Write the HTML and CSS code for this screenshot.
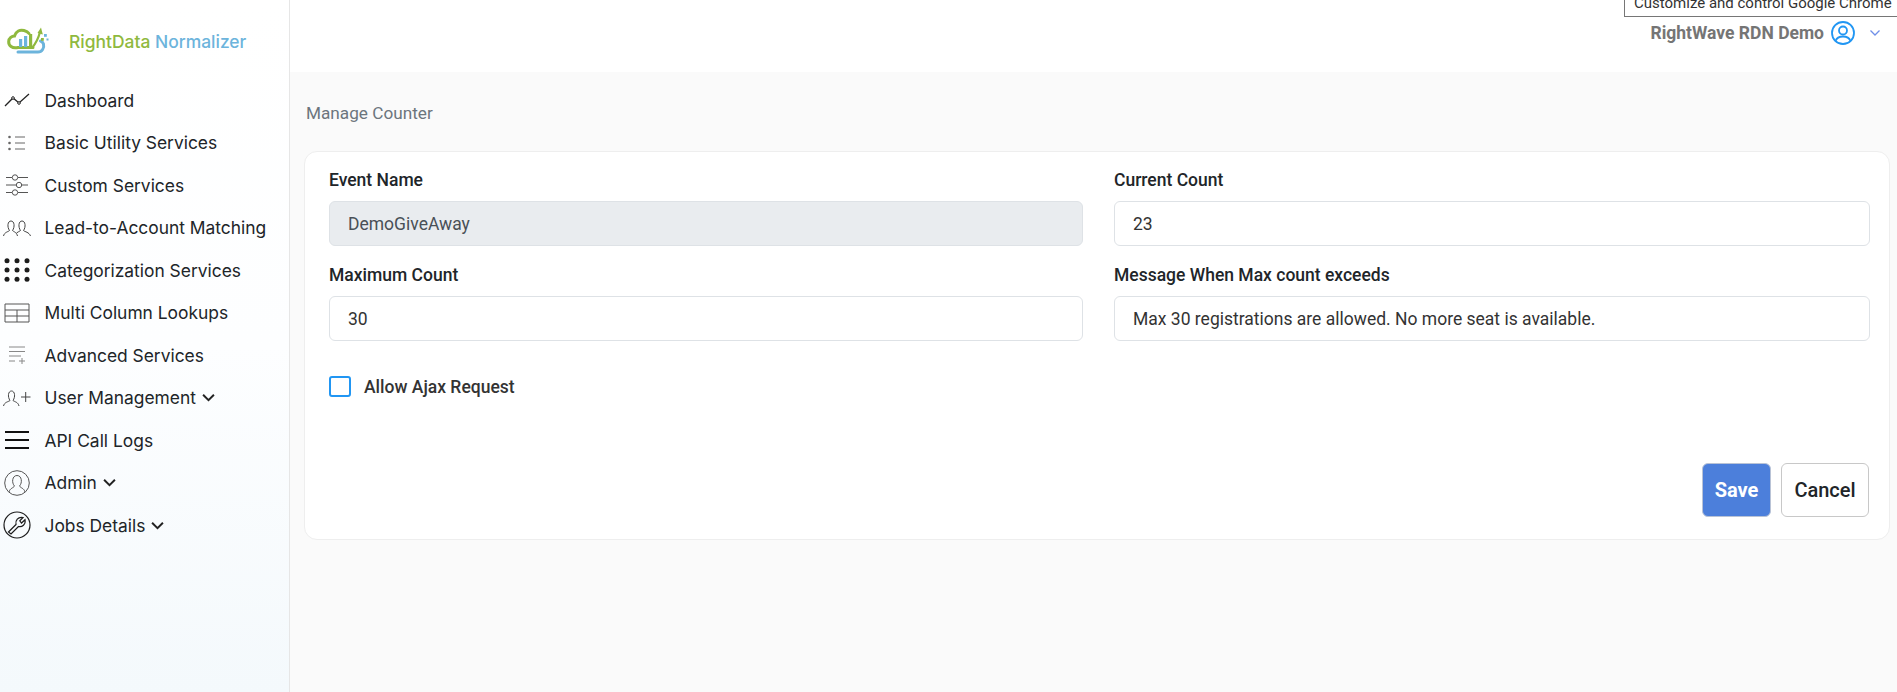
FILE: index.html
```html
<!DOCTYPE html>
<html lang="en">
<head>
<meta charset="utf-8">
<title>Manage Counter</title>
<link rel="stylesheet" href="styles.css">
</head>
<body>
<div class="app">
  <aside class="sidebar">
    <div class="brand">
      <svg class="logo" viewBox="0 0 42 28" width="42" height="28">
        <path d="M26 20.500H11C5 22 1.500 18.500 1.700 14.500C1.900 11 5 9 7.500 9C9 4 13 2.500 17 3.500C19 4 21 5 22 6.500" fill="none" stroke="#8fb93e" stroke-width="3" stroke-linecap="round"/>
        <path d="M11 25H31C35 25 37.500 21 36.500 17C36 15.500 35 14.500 33.500 14" fill="none" stroke="#6cb4dc" stroke-width="3" stroke-linecap="round"/>
        <rect x="12" y="12" width="3.200" height="8" fill="#6cb4dc"/>
        <rect x="17" y="9" width="3.200" height="11" fill="#6cb4dc"/>
        <rect x="22" y="7" width="3.200" height="13" fill="#8fb93e"/>
        <path d="M25 21C29 16 31.500 11 33 5" fill="none" stroke="#8fb93e" stroke-width="2.200"/>
        <path d="M30.500 6L34 0.500L35.800 7.500Z" fill="#8fb93e"/>
        <rect x="37" y="7" width="2.800" height="2.800" fill="#6cb4dc"/>
        <rect x="34" y="11" width="2.800" height="2.800" fill="#8fb93e"/>
        <rect x="39.500" y="11.500" width="2" height="2" fill="#6cb4dc"/>
      </svg>
      <span class="brand-name"><span class="brand-green">RightData</span> <span class="brand-blue">Normalizer</span></span>
    </div>
    <nav class="nav">
      <a class="nav-item">
        <svg class="ico" viewBox="0 0 26 16"><path d="M1 14L9 6L15 11L25 2" fill="none" stroke="#222" stroke-width="1.300"/><circle cx="9" cy="6" r="1.300" fill="#fff" stroke="#222"/><circle cx="15" cy="11" r="1.300" fill="#fff" stroke="#222"/></svg>
        <span>Dashboard</span>
      </a>
      <a class="nav-item">
        <svg class="ico" viewBox="0 0 26 16"><g fill="#666"><circle cx="5.500" cy="2" r="1.300"/><circle cx="5.500" cy="8" r="1.300"/><circle cx="5.500" cy="14" r="1.300"/></g><path d="M11 2H21M11 8H21M11 14H21" stroke="#666" stroke-width="1"/></svg>
        <span>Basic Utility Services</span>
      </a>
      <a class="nav-item">
        <svg class="ico" viewBox="0 0 26 22"><path d="M2 3.500H8M14 3.500H24M2 11H12M18 11H24M2 18.500H8M14 18.500H24" stroke="#555" stroke-width="1"/><g fill="none" stroke="#555"><circle cx="11" cy="3.500" r="2.700"/><circle cx="15" cy="11" r="2.700"/><circle cx="11" cy="18.500" r="2.700"/></g></svg>
        <span>Custom Services</span>
      </a>
      <a class="nav-item">
        <svg class="ico ico-wide" viewBox="0 0 28 18"><g fill="none" stroke="#444" stroke-width="1"><path d="M0.500 17C1.500 13 5 13 6.500 11.500C4 8 4.500 2 8 2C11.500 2 12 8 9.500 11.500C11 13 13.500 13 14.500 17"/><path d="M13.500 14C14.500 13 16 12.800 17.500 11.500C15 8 15.500 2 19 2C22.500 2 23 8 20.500 11.500C22 13 26 13 27.500 17"/></g></svg>
        <span>Lead-to-Account Matching</span>
      </a>
      <a class="nav-item">
        <svg class="ico" viewBox="0 0 26 24"><g fill="#1c1c1c"><circle cx="3" cy="2.700" r="2.500"/><circle cx="13" cy="2.700" r="2.500"/><circle cx="23" cy="2.700" r="2.500"/><circle cx="3" cy="12" r="2.500"/><circle cx="13" cy="12" r="2.500"/><circle cx="23" cy="12" r="2.500"/><circle cx="3" cy="21.300" r="2.500"/><circle cx="13" cy="21.300" r="2.500"/><circle cx="23" cy="21.300" r="2.500"/></g></svg>
        <span>Categorization Services</span>
      </a>
      <a class="nav-item">
        <svg class="ico" viewBox="0 0 26 20"><path d="M1 1H25V19H1ZM1 7H25M1 13H25M13 7V19" fill="none" stroke="#555" stroke-width="1"/></svg>
        <span>Multi Column Lookups</span>
      </a>
      <a class="nav-item">
        <svg class="ico" viewBox="0 0 26 18"><path d="M5 1H21M5 5.500H21M5 10H17M5 15H11M15 15H21M18 12V18" fill="none" stroke="#888" stroke-width="1"/></svg>
        <span>Advanced Services</span>
      </a>
      <a class="nav-item">
        <svg class="ico ico-wide" viewBox="0 0 28 18"><g fill="none" stroke="#444" stroke-width="1"><path d="M0.500 17C1.500 13 5 13 7 11.500C4.500 8 5 2 8.500 2C12 2 12.500 8 10 11.500C12 13 15 13 16 17"/><path d="M18 8H27.500M22.700 3V13"/></g></svg>
        <span>User Management</span>
        <svg class="caret" viewBox="0 0 12 8"><path d="M1 1.500L6 6.500L11 1.500" fill="none" stroke="#222" stroke-width="1.800"/></svg>
      </a>
      <a class="nav-item">
        <svg class="ico" viewBox="0 0 26 20"><path d="M1 2H25M1 10H25M1 18H25" stroke="#111" stroke-width="1.800"/></svg>
        <span>API Call Logs</span>
      </a>
      <a class="nav-item">
        <svg class="ico" viewBox="0 0 26 26"><circle cx="13" cy="13" r="12.300" fill="none" stroke="#555"/><path d="M5 22C6 18 9.500 18 10.500 16C7.500 13 8 5.500 13 5.500C18 5.500 18.500 13 15.500 16C16.500 18 20 18 21 22" fill="none" stroke="#555"/></svg>
        <span>Admin</span>
        <svg class="caret" viewBox="0 0 12 8"><path d="M1 1.500L6 6.500L11 1.500" fill="none" stroke="#222" stroke-width="1.800"/></svg>
      </a>
      <a class="nav-item">
        <svg class="ico ico-large" viewBox="0 0 28 28"><circle cx="14" cy="14" r="13" fill="none" stroke="#1c1c1c" stroke-width="1.200"/><path d="M5.500 21L13 13.500C12 9.500 15 5.500 20 6.500L16.800 9.800L18.500 12L22 8.700C23 13.500 19 16.500 15.500 15.500L8 23Z" fill="none" stroke="#1c1c1c" stroke-width="1.200"/></svg>
        <span>Jobs Details</span>
        <svg class="caret" viewBox="0 0 12 8"><path d="M1 1.500L6 6.500L11 1.500" fill="none" stroke="#222" stroke-width="1.800"/></svg>
      </a>
    </nav>
  </aside>
  <div class="main">
    <header class="topbar">
      <div class="tooltip">Customize and control Google Chrome</div>
      <div class="user">
        <span class="user-name">RightWave RDN Demo</span>
        <svg class="user-ico" viewBox="0 0 24 24"><g fill="none" stroke="#2196f3" stroke-width="1.800"><circle cx="12" cy="12" r="11"/><circle cx="12" cy="9.500" r="4"/><path d="M4.500 20C6 16 9 15.500 12 15.500C15 15.500 18 16 19.500 20"/></g></svg>
        <svg class="user-caret" viewBox="0 0 12 8"><path d="M1.500 1.500L6 6L10.500 1.500" fill="none" stroke="#6f8fe8" stroke-width="1.300"/></svg>
      </div>
    </header>
    <main class="content">
      <h1 class="title">Manage Counter</h1>
      <section class="card">
        <div class="form-grid">
          <div class="field">
            <label class="label">Event Name</label>
            <input class="input input-disabled" value="DemoGiveAway" disabled>
          </div>
          <div class="field">
            <label class="label">Current Count</label>
            <input class="input" value="23">
          </div>
          <div class="field">
            <label class="label">Maximum Count</label>
            <input class="input" value="30">
          </div>
          <div class="field">
            <label class="label">Message When Max count exceeds</label>
            <input class="input" value="Max 30 registrations are allowed. No more seat is available.">
          </div>
        </div>
        <div class="check-row">
          <span class="check"></span>
          <span class="check-label">Allow Ajax Request</span>
        </div>
        <div class="actions">
          <button class="btn btn-save">Save</button>
          <button class="btn btn-cancel">Cancel</button>
        </div>
      </section>
    </main>
  </div>
</div>
</body>
</html>
```
FILE: styles.css
```css
* { box-sizing: border-box; }
html, body { margin: 0; height: 100%; overflow: hidden; }
body { font-family: Roboto, "Liberation Sans", sans-serif; color: #212529; background: #fff; }
.app { display: flex; height: 692px; }

.sidebar {
  width: 290px;
  flex: none;
  border-right: 1px solid #e6e6e6;
  background: linear-gradient(180deg, #ffffff 0%, #fdfeff 50%, #f4f9fc 100%);
}
.brand { display: flex; align-items: center; height: 72px; padding: 10px 0 0 7px; margin-bottom: 7px; }
.logo { flex: none; margin-right: 20px; margin-top: -1px; }
.brand-name { font-family: Inter, sans-serif; font-size: 17.450px; font-weight: 500; }
.brand-green { color: #8fb93e; }
.brand-blue { color: #6cb4dc; }

.nav { display: flex; flex-direction: column; }
.nav-item {
  display: flex;
  align-items: center;
  height: 42.5px;
  font-family: Inter, sans-serif;
  font-size: 17.400px;
  color: #212529;
  position: relative;
  padding-left: 44.5px;
}
.ico { position: absolute; left: 4px; top: 50%; width: 26px; height: 26px; transform: translateY(-50%); }
.ico-wide { left: 3px; width: 28px; height: 28px; }
.ico-large { left: 3px; width: 28px; height: 28px; }
.caret { width: 13px; height: 9px; margin-left: 6px; }

.main { flex: 1; display: flex; flex-direction: column; min-width: 0; }
.topbar { height: 72px; flex: none; background: #fff; position: relative; }
.tooltip {
  position: absolute;
  top: -7px;
  left: 1334px;
  width: 280px;
  height: 24px;
  padding: 0 9px;
  border: 1px solid #767676;
  border-top: 0;
  background: #fff;
  font-size: 15px;
  line-height: 20px;
  color: #333;
  white-space: nowrap;
  overflow: hidden;
}
.user { position: absolute; right: 16px; top: 21px; display: flex; align-items: center; }
.user-name { font-size: 17.500px; font-weight: 700; color: #757575; }
.user-ico { width: 24px; height: 24px; margin-left: 7px; }
.user-caret { width: 12px; height: 8px; margin-left: 14px; }

.content { flex: 1; background: #fafafa; padding: 31px 7px 0 14px; }
.title { margin: 0 0 27px 2px; font-size: 17.200px; line-height: 21px; font-weight: 400; color: #6c757d; }
.card {
  height: 389px;
  padding: 16px 20px 0 24px;
  background: #fff;
  border: 1px solid #eeeeee;
  border-radius: 13px;
  display: flex;
  flex-direction: column;
}
.form-grid { display: grid; grid-template-columns: 754px 756px; column-gap: 31px; row-gap: 0; }
.field { display: flex; flex-direction: column; height: 95px; }
.label { font-size: 17.500px; font-weight: 500; line-height: 24px; color: #212529; margin-bottom: 9px; }
.input {
  width: 100%;
  height: 45px;
  padding: 0 18px;
  border: 1px solid #dee2e6;
  border-radius: 6px;
  background: #fff;
  font-family: Roboto, sans-serif;
  font-size: 17.500px;
  color: #333;
}
.input-disabled { background: #e9ecef; color: #495057; }
.check-row { display: flex; align-items: center; margin-top: 18px; }
.check { width: 22px; height: 21px; border: 2px solid #2196f3; border-radius: 3px; background: #fff; }
.check-label { margin-left: 13px; font-size: 17.500px; font-weight: 500; color: #333; }
.actions { display: flex; justify-content: flex-end; gap: 10px; margin-top: auto; margin-bottom: 22px; }
.btn { height: 54px; border-radius: 6px; font-family: Roboto, sans-serif; font-size: 20px; }
.btn-save { width: 69px; background: #4c7fdb; border: 1px solid #b9c3d6; color: #fff; font-weight: 700; }
.btn-cancel { width: 88px; background: #fff; border: 1px solid #c8c8c8; color: #212529; font-weight: 500; }
```
